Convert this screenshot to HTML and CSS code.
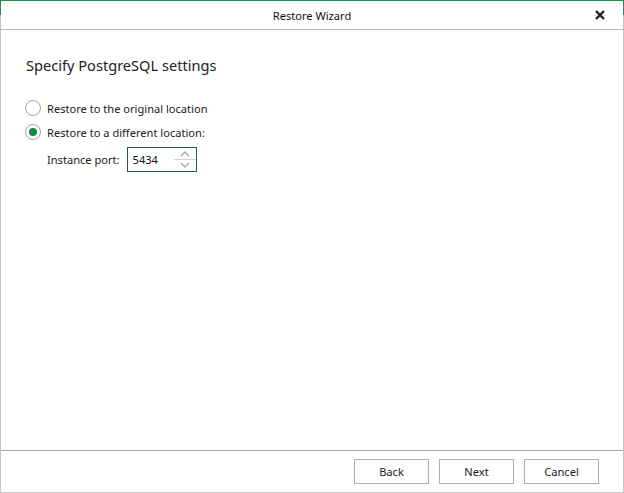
FILE: index.html
```html
<!DOCTYPE html>
<html>
<head>
<meta charset="utf-8">
<link rel="stylesheet" href="styles.css">
</head>
<body>
<div class="window">
  <div class="titlebar">
    <span></span>
    <span class="title">Restore Wizard</span>
    <span class="close-wrap">
      <svg class="close" width="10" height="10" viewBox="0 0 10 10"><path d="M1 1 L9 9 M9 1 L1 9" stroke="#1a1a1a" stroke-width="2.2" fill="none"/></svg>
    </span>
  </div>
  <div class="content">
    <h1 class="heading">Specify PostgreSQL settings</h1>
    <div class="options">
      <label class="option"><span class="radio"></span><span>Restore to the original location</span></label>
      <label class="option"><span class="radio checked"></span><span>Restore to a different location:</span></label>
      <div class="port-row">
        <span>Instance port:</span>
        <div class="spin">
          <span class="spin-value">5434</span>
          <div class="spin-btns">
            <svg width="10" height="6" viewBox="0 0 10 6"><path d="M1 5 L5 1 L9 5" stroke="#a6a6a6" stroke-width="1.3" fill="none"/></svg>
            <span class="spin-sep"></span>
            <svg width="10" height="6" viewBox="0 0 10 6"><path d="M1 1 L5 5 L9 1" stroke="#a6a6a6" stroke-width="1.3" fill="none"/></svg>
          </div>
        </div>
      </div>
    </div>
  </div>
  <div class="footer">
    <button class="btn">Back</button>
    <button class="btn">Next</button>
    <button class="btn">Cancel</button>
  </div>
</div>
</body>
</html>
```
FILE: styles.css
```css
* { box-sizing: border-box; }
html, body { margin: 0; padding: 0; background: #fff; }
body { font-family: "Noto Sans", "Open Sans", sans-serif; font-size: 11.1px; color: #1a1a1a; }
.window {
  position: relative;
  width: 624px;
  height: 493px;
  display: flex;
  flex-direction: column;
  border-left: 1px solid #c4c4c4;
  border-right: 1px solid #c4c4c4;
  border-bottom: 1px solid #c4c4c4;
  background: #fff;
}
.window::before, .window::after {
  content: "";
  position: absolute;
  top: 0;
  width: 1px;
  height: 15px;
  background: #2a8553;
}
.window::before { left: -1px; }
.window::after { right: -1px; }
.titlebar {
  height: 30px;
  border-top: 1px solid #2a8553;
  border-bottom: 1px solid #b5b5b5;
  display: grid;
  grid-template-columns: 1fr auto 1fr;
  align-items: center;
  margin: 0 -1px;
  padding: 0 1px;
}
.title { font-size: 11.1px; color: #111; }
.close-wrap { display: flex; justify-content: flex-end; padding-right: 18px; }
.close { display: block; }
.content { flex: 1; padding: 25px 24px 0 24px; }
.heading { margin: 0 0 21px 1px; font-weight: normal; font-size: 14.6px; color: #222; line-height: 20px; }
.options { display: flex; flex-direction: column; }
.option { display: flex; align-items: center; gap: 6px; height: 24px; }
.radio {
  width: 16px; height: 16px; border-radius: 50%;
  border: 1px solid #a2a2a2; background: #fff;
  display: flex; align-items: center; justify-content: center;
}
.radio.checked::after {
  content: ""; width: 8px; height: 8px; border-radius: 50%; background: #138a3f;
}
.port-row { display: flex; align-items: center; gap: 7px; padding-left: 22px; margin-top: 3px; }
.spin {
  width: 70px; height: 25px;
  border: 1px solid #1d5e36;
  display: flex; align-items: center; justify-content: space-between;
  padding-left: 5px;
}
.spin-value { font-size: 11.1px; color: #111; }
.spin-btns { display: flex; flex-direction: column; align-items: center; width: 24px; gap: 2px; padding-left: 2px; }
.spin-btns svg { display: block; }
.spin-sep { width: 100%; height: 1px; background: #d0d0d0; }
.footer {
  height: 42px;
  border-top: 1px solid #a3a7ab;
  display: flex;
  justify-content: flex-end;
  align-items: flex-start;
  gap: 10px;
  padding: 8px 24px 0 0;
}
.btn {
  width: 75px; height: 25px;
  border: 1px solid #acb0b4;
  background: #fff;
  font-family: inherit; font-size: 11.1px; color: #1a1a1a;
  padding: 0;
}
```
